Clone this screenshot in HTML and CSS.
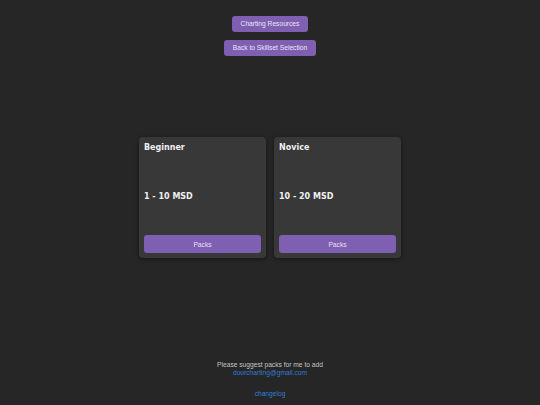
FILE: index.html
```html
<!DOCTYPE html>
<html>
<head>
<meta charset="utf-8">
<link rel="stylesheet" href="styles.css">
</head>
<body>
<div class="top">
  <button class="btn">Charting Resources</button>
  <button class="btn">Back to Skillset Selection</button>
</div>
<div class="cards">
  <div class="card">
    <div class="title">Beginner</div>
    <div class="range">1 - 10 MSD</div>
    <button class="packs">Packs</button>
  </div>
  <div class="card">
    <div class="title">Novice</div>
    <div class="range">10 - 20 MSD</div>
    <button class="packs">Packs</button>
  </div>
</div>
<div class="footer">
  <div class="line">Please suggest packs for me to add</div>
  <div class="line"><a class="link" href="#">dourcharting@gmail.com</a></div>
  <div class="change"><a class="link" href="#">changelog</a></div>
</div>
</body>
</html>
```
FILE: styles.css
```css
html, body {
  margin: 0;
  padding: 0;
  background: #262626;
  height: 100%;
}
body {
  font-family: "Liberation Sans", Arial, sans-serif;
  padding-top: 16px;
  box-sizing: border-box;
}
.top {
  display: flex;
  flex-direction: column;
  align-items: center;
  gap: 8px;
}
.btn {
  font-family: "Liberation Sans", Arial, sans-serif;
  font-size: 6.67px;
  height: 16px;
  padding: 0 9px;
  border: none;
  border-radius: 3px;
  background: #7e5fb1;
  color: #ece6f4;
  line-height: 16px;
}
.cards {
  display: flex;
  justify-content: center;
  gap: 8px;
  margin-top: 81px;
}
.card {
  width: 127px;
  height: 121px;
  box-sizing: border-box;
  padding: 5px;
  background: #383838;
  border-radius: 4px;
  box-shadow: 0 1px 4px rgba(0,0,0,0.45);
  display: flex;
  flex-direction: column;
  font-family: "DejaVu Sans", Verdana, sans-serif;
  font-weight: bold;
  font-size: 8px;
  color: #f0f0f0;
}
.title {
  line-height: 10px;
  margin-top: 1px;
}
.range {
  line-height: 10px;
  margin-top: 39px;
}
.packs {
  margin-top: auto;
  height: 18px;
  width: 100%;
  border: none;
  border-radius: 3px;
  background: #7e5fb1;
  color: #e8e0f2;
  font-family: "Liberation Sans", Arial, sans-serif;
  font-size: 6.67px;
  font-weight: normal;
  padding: 0;
}
.footer {
  margin-top: 103px;
  text-align: center;
  font-size: 6.67px;
  color: #c4c4c4;
}
.line {
  line-height: 7.5px;
}
.change {
  margin-top: 14px;
  line-height: 7.5px;
}
.link {
  color: #2f7ed8;
  text-decoration: none;
}
```
